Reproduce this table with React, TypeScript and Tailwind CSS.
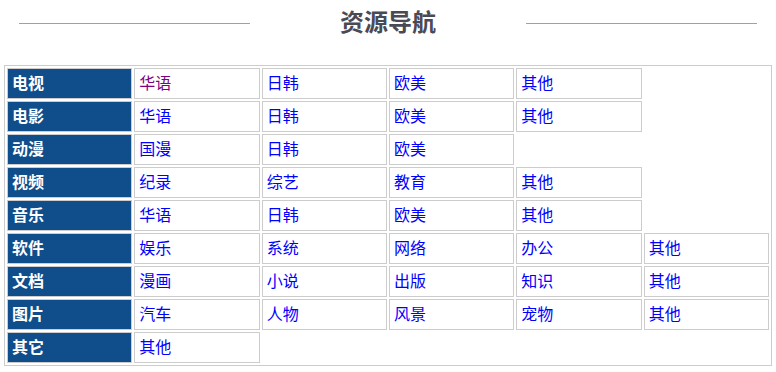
const rows: { title: string; links: string[] }[] = [
  { title: '电视', links: ['华语', '日韩', '欧美', '其他'] },
  { title: '电影', links: ['华语', '日韩', '欧美', '其他'] },
  { title: '动漫', links: ['国漫', '日韩', '欧美'] },
  { title: '视频', links: ['纪录', '综艺', '教育', '其他'] },
  { title: '音乐', links: ['华语', '日韩', '欧美', '其他'] },
  { title: '软件', links: ['娱乐', '系统', '网络', '办公', '其他'] },
  { title: '文档', links: ['漫画', '小说', '出版', '知识', '其他'] },
  { title: '图片', links: ['汽车', '人物', '风景', '宠物', '其他'] },
  { title: '其它', links: ['其他'] },
];

export default function App() {
  return (
    <div
      className="h-[372px] w-[776px] bg-white px-1"
      style={{ fontFamily: '"Liberation Sans", "Noto Sans CJK SC", sans-serif' }}
    >
      {/* 标题 */}
      <div className="flex h-[46px] items-center px-[15px]">
        <div className="h-px flex-1 bg-[#9aa2b1]" />
        <h2 className="mx-[90px] text-[24px] font-bold leading-none text-[#4a4a55]">资源导航</h2>
        <div className="h-px flex-1 bg-[#9aa2b1]" />
      </div>

      <table className="mt-[19px] w-full table-fixed border-separate border-spacing-[2px] border border-[#cccccc] text-[16px]">
        <colgroup>
          <col />
          <col />
          <col />
          <col />
          <col />
          <col />
        </colgroup>
        <tbody>
          {rows.map((row, i) => (
            <tr key={row.title}>
              <th className="h-[31px] border border-[#cccccc] bg-[#104e8b] px-1 py-0 text-left font-bold text-white">
                {row.title}
              </th>
              {row.links.map((l, j) => (
                <td key={j} className="h-[31px] border border-[#cccccc] px-1 py-0">
                  <a
                    href="#"
                    className={i === 0 && j === 0 ? 'text-[#800080]' : 'text-[#0000ff]'}
                  >
                    {l}
                  </a>
                </td>
              ))}
            </tr>
          ))}
        </tbody>
      </table>
    </div>
  );
}
